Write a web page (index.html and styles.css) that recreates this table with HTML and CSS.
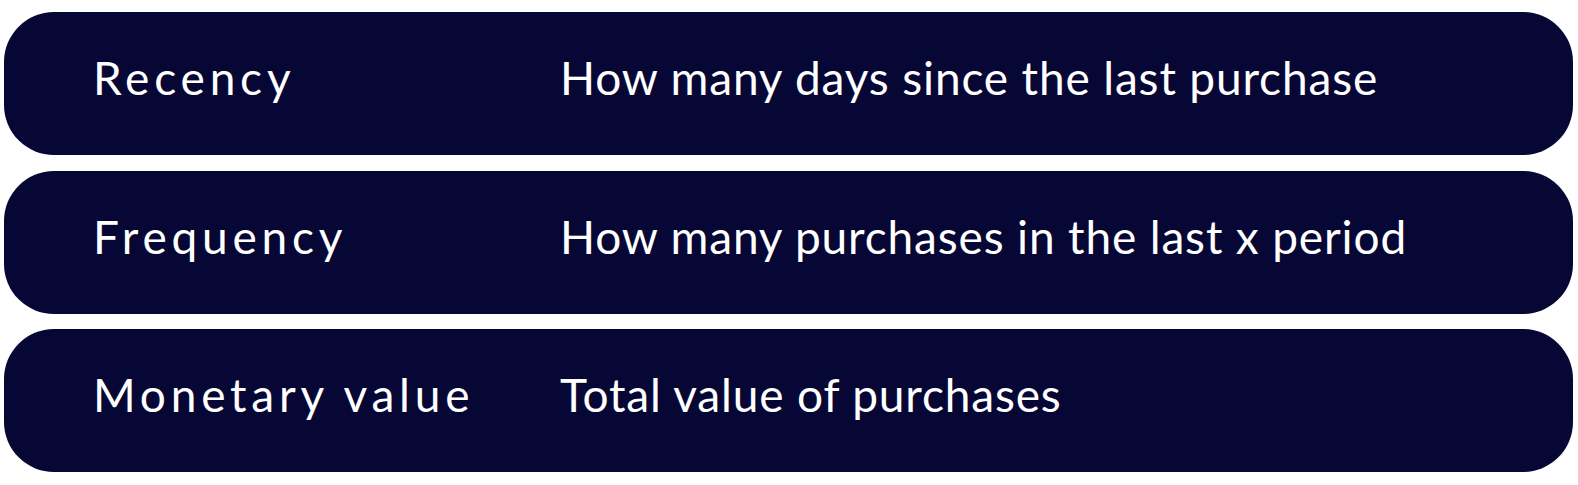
FILE: index.html
```html
<!DOCTYPE html>
<html lang="en">
<head>
<meta charset="utf-8">
<link rel="stylesheet" href="styles.css">
</head>
<body>
<div class="list">
  <div class="row"><div class="label">Recency</div><div class="desc">How many days since the last purchase</div></div>
  <div class="row"><div class="label">Frequency</div><div class="desc">How many purchases in the last x period</div></div>
  <div class="row"><div class="label">Monetary value</div><div class="desc">Total value of purchases</div></div>
</div>
</body>
</html>
```
FILE: styles.css
```css
html, body { margin: 0; padding: 0; background: #ffffff; }
.list {
  display: flex;
  flex-direction: column;
  gap: 15.5px;
  padding: 12px 5px 0 4px;
}
.row {
  height: 143px;
  background: #070735;
  border-radius: 50px;
  display: grid;
  grid-template-columns: 467px 1fr;
  align-items: center;
  padding: 0 0 12px 89px;
  box-sizing: border-box;
  color: #ffffff;
  font-family: "Lato", "Liberation Sans", sans-serif;
  font-size: 46px;
}
.label, .desc { white-space: nowrap; }
.label { letter-spacing: 4.8px; }
.desc { letter-spacing: 0.85px; }
```
